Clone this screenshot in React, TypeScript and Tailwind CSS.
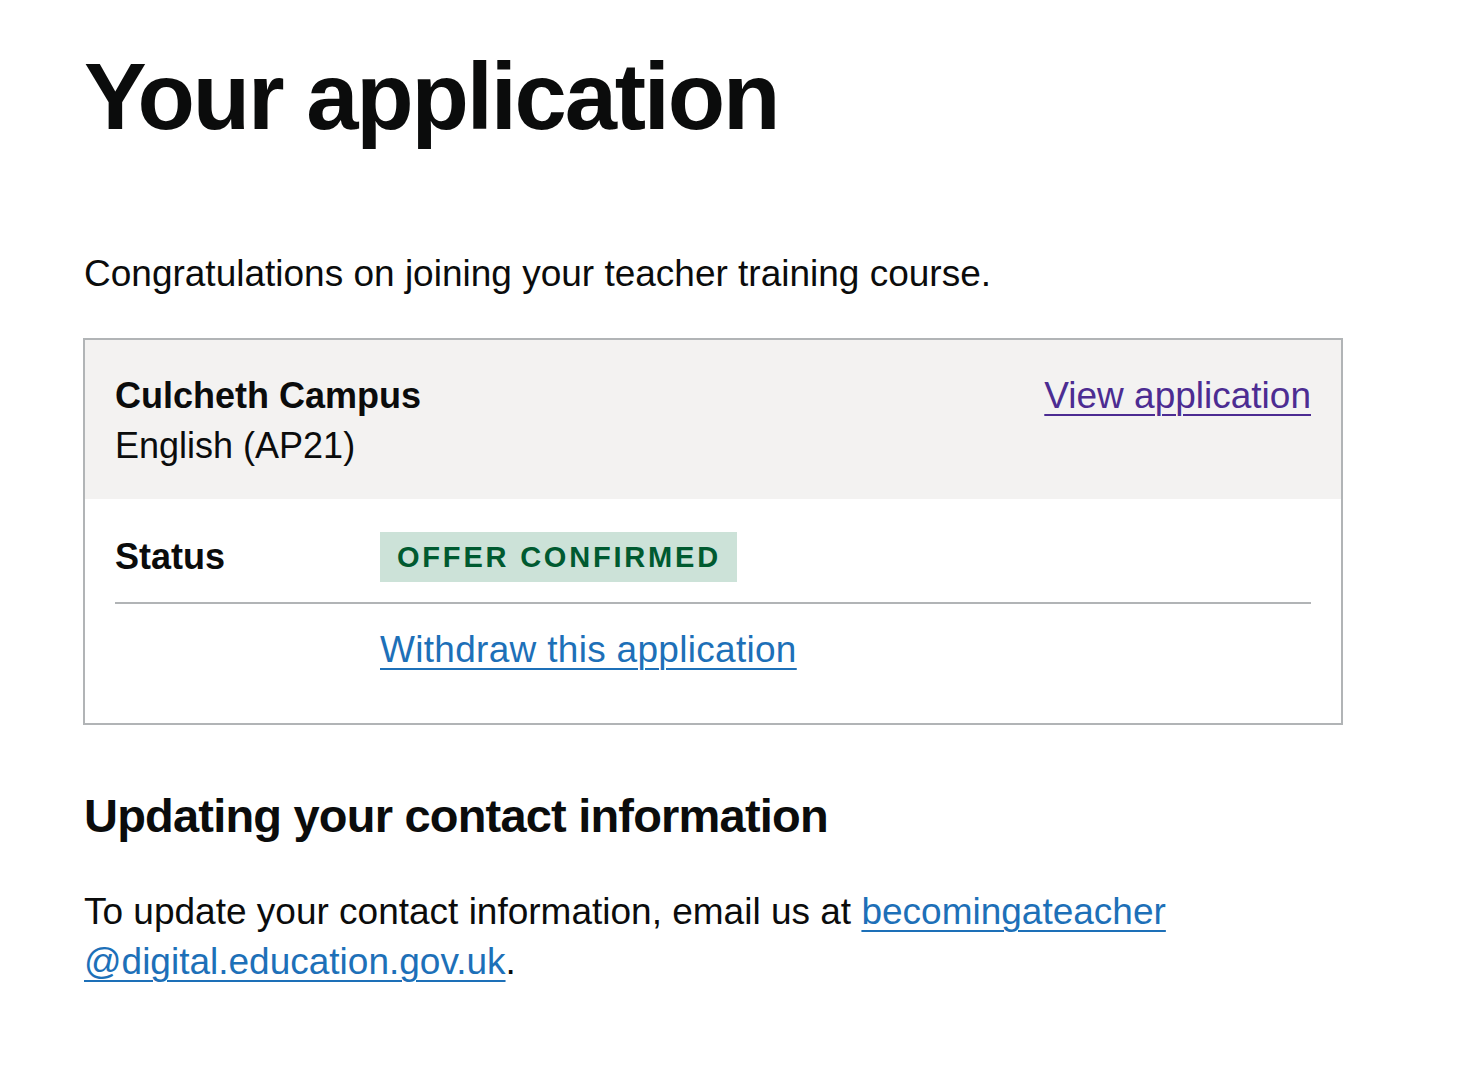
import React from "react";

export default function App() {
  return (
    <div className="min-h-[1088px] w-full bg-white font-['Liberation_Sans',Arial,sans-serif] text-[#0b0c0c]">
      <main className="pl-[83px] pt-[47px] w-[1343px]">
        <h1 className="text-[94px] leading-[100px] font-bold tracking-[-2.2px] pl-[1px]">
          Your application
        </h1>

        <p className="mt-[102px] text-[37px] leading-[50px] pl-[1px]">
          Congratulations on joining your teacher training course.
        </p>

        <section className="mt-[39px] w-[1260px] border-2 border-[#b1b4b6]">
          <div className="flex items-start justify-between bg-[#f3f2f1] px-[30px] pt-[31px] pb-[28px]">
            <div>
              <div className="text-[36px] leading-[50px] font-bold">Culcheth Campus</div>
              <div className="text-[36px] leading-[50px]">English (AP21)</div>
            </div>
            <a
              href="#"
              className="text-[37px] leading-[50px] text-[#4c2c92] underline decoration-[2px] underline-offset-[6px]"
            >
              View application
            </a>
          </div>

          <div className="mx-[30px]">
            <div className="flex items-center pt-[33px] pb-[20px] border-b-2 border-[#b1b4b6]">
              <div className="w-[265px] text-[36px] leading-[50px] font-bold">Status</div>
              <div>
                <span className="inline-flex h-[50px] items-center bg-[#cce2d8] pl-[17px] pr-[16px] pt-[1px] text-[29px] font-bold tracking-[2.8px] text-[#005a30]">
                  OFFER CONFIRMED
                </span>
              </div>
            </div>
            <div className="flex pt-[21px] pb-[48px]">
              <div className="w-[265px]" />
              <a
                href="#"
                className="text-[37px] leading-[50px] tracking-[0.3px] text-[#1d70b8] underline decoration-[2px] underline-offset-[6px]"
              >
                Withdraw this application
              </a>
            </div>
          </div>
        </section>

        <h2 className="mt-[66px] text-[47px] leading-[50px] font-bold tracking-[-0.8px] pl-[1px]">
          Updating your contact information
        </h2>

        <p className="mt-[46px] text-[37px] leading-[50px] pl-[1px]">
          To update your contact information, email us at{" "}
          <a
            href="#"
            className="text-[#1d70b8] underline decoration-[2px] underline-offset-[6px]"
          >
            becomingateacher
            <br />
            @digital.education.gov.uk
          </a>
          .
        </p>
      </main>
    </div>
  );
}
